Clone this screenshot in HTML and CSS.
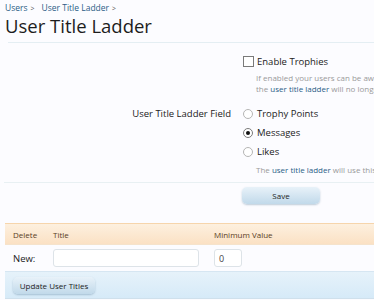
FILE: index.html
```html
<!DOCTYPE html>
<html>
<head>
<meta charset="utf-8">
<link rel="stylesheet" href="styles.css">
</head>
<body>
<div class="page">
  <div class="crumbs"><a>Users</a><span class="sep">&gt;</span><a>User Title Ladder</a><span class="sep">&gt;</span></div>
  <h1 class="title">User Title Ladder</h1>

  <form class="options">
    <div class="row">
      <div class="label"></div>
      <div class="ctrl">
        <label class="opt"><span class="check"></span>Enable Trophies</label>
        <p class="explain">If enabled your users can be awarded trophies for completing certain tasks, and<br>the <a>user title ladder</a> will no longer be used for anything other than display.</p>
      </div>
    </div>
    <div class="row field">
      <div class="label">User Title Ladder Field</div>
      <div class="ctrl">
        <label class="opt"><span class="radio"></span>Trophy Points</label>
        <label class="opt"><span class="radio on"></span>Messages</label>
        <label class="opt"><span class="radio"></span>Likes</label>
        <p class="explain">The <a>user title ladder</a> will use this field to determine the title.</p>
      </div>
    </div>
    <div class="row submit">
      <div class="label"></div>
      <div class="ctrl"><span class="button save">Save</span></div>
    </div>
  </form>

  <div class="ladder">
    <div class="thead">
      <span class="c-del">Delete</span>
      <span class="c-title">Title</span>
      <span class="c-min">Minimum Value</span>
    </div>
    <div class="trow">
      <span class="c-del new">New:</span>
      <span class="c-title"><span class="input wide"></span></span>
      <span class="c-min"><span class="input small">0</span></span>
    </div>
    <div class="tfoot"><span class="button upd">Update User Titles</span></div>
  </div>
</div>
</body>
</html>
```

FILE: styles.css
```css
html, body {
  margin: 0;
  padding: 0;
  background: #fcfcff;
  overflow: hidden;
}
body {
  font-family: "Open Sans", "DejaVu Sans", sans-serif;
  color: #222;
  width: 374px;
}
.page {
  width: 700px;
}
.crumbs {
  font-size: 8.5px;
  color: #2b5d86;
  padding: 2px 0 0 5px;
  height: 12px;
  line-height: 12px;
}
.crumbs a { color: #2b5d86; }
.crumbs .sep { color: #555; font-size: 7px; margin: 0 7px 0 3px; }
.title {
  font-family: "Open Sans", sans-serif;
  font-weight: normal;
  font-size: 18.5px;
  line-height: 24px;
  margin: 0 0 0 5px;
  color: #1d1d1d;
  padding-bottom: 5px;
}
.title::after {
  content: "";
  display: block;
  margin: 4px 0 -4px 3px;
  border-bottom: 1px solid #e4eef3;
}
.options {
  margin: 0;
  padding-top: 9px;
}
.row {
  display: flex;
}
.label {
  width: 231px;
  text-align: right;
  font-size: 9.5px;
  line-height: 19px;
  color: #222;
  flex: none;
}
.ctrl {
  margin-left: 12px;
  font-size: 9.5px;
}
.opt {
  display: flex;
  align-items: center;
  height: 16px;
  color: #222;
  font-size: 9.5px;
}
.check {
  width: 11px;
  height: 11px;
  box-sizing: border-box;
  border: 1px solid #7a7a7a;
  background: #fff;
  margin-right: 3px;
  flex: none;
}
.radio {
  width: 10px;
  height: 10px;
  box-sizing: border-box;
  border: 1px solid #b5b5b5;
  border-radius: 50%;
  background: #fff;
  margin-right: 4px;
  flex: none;
  position: relative;
}
.radio.on { border-color: #7a7a7a; }
.radio.on::after {
  content: "";
  position: absolute;
  left: 2px;
  top: 2px;
  width: 4px;
  height: 4px;
  border-radius: 50%;
  background: #111;
}
.explain {
  margin: 3px 0 0 13px;
  font-size: 8px;
  line-height: 11px;
  color: #9a9a9a;
  white-space: nowrap;
}
.explain a { color: #2b5d86; }
.row.field { margin-top: 10px; }
.row.field .opt { height: 19px; }
.row.field .explain { margin-top: 3px; }
.row.submit {
  margin: 7px 0 0 4px;
  border-top: 1px solid #e8f0f3;
  padding-top: 4px;
  height: 24px;
}
.row.submit .label { width: 227px; }
.button {
  display: inline-block;
  height: 17px;
  line-height: 17px;
  font-size: 8px;
  color: #222;
  text-align: center;
  border-radius: 5px;
  background: linear-gradient(#e8f2f9, #c1d9ea);
  box-shadow: 0 1px 2px rgba(70,110,140,0.35);
}
.save { width: 78px; margin-left: -1px; }
.ladder {
  margin: 12px 0 0 5px;
}
.thead {
  display: flex;
  height: 20px;
  align-items: center;
  border-top: 1px solid #f6d5ac;
  background: linear-gradient(#fdf0df, #fbe1c4);
  font-size: 8px;
  color: #5a3d1e;
}
.c-del { width: 40px; padding-left: 8px; flex: none; }
.c-title { width: 161px; flex: none; }
.c-min { flex: none; }
.trow {
  display: flex;
  align-items: center;
  height: 26px;
  border-top: 1px solid #f5e3cc;
}
.new { font-size: 9.5px; color: #222; }
.input {
  display: block;
  height: 18px;
  border: 1px solid #dde3e8;
  border-radius: 3px;
  background: #fff;
  font-size: 9px;
  line-height: 18px;
  padding-left: 4px;
  box-sizing: border-box;
  color: #444;
}
.wide { width: 146px; }
.small { width: 28px; }
.tfoot {
  height: 26px;
  background: linear-gradient(#e6f2fa, #d6eaf8);
  border-top: 1px solid #d6e6f2;
  border-bottom: 1px solid #cfe0ec;
  display: flex;
  align-items: center;
  padding-left: 8px;
}
.upd { width: 82px; }
```
